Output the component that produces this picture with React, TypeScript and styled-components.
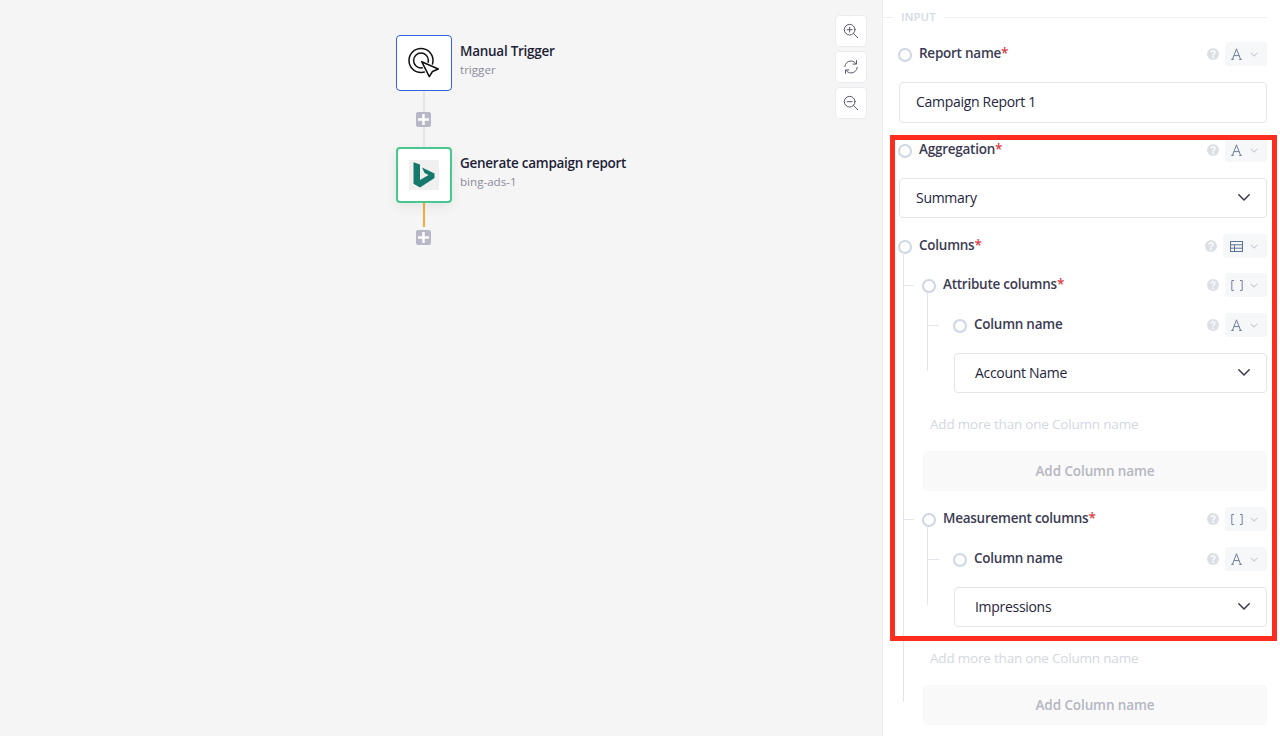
import React from "react";
import styled, { createGlobalStyle } from "styled-components";

const Global = createGlobalStyle`
  html, body { margin: 0; padding: 0; height: 100%; background: #fff; overflow: hidden; }
  body { font-family: "Open Sans", "Noto Sans", sans-serif; }
  * { box-sizing: border-box; }
`;

const Page = styled.div`
  position: relative;
  display: flex;
  width: 1280px;
  height: 736px;
  overflow: hidden;
`;

const Canvas = styled.main`
  position: relative;
  flex: 0 0 882px;
  height: 736px;
  background: #f5f5f5;
  padding: 35px 0 0 396px;
`;

const Controls = styled.div`
  position: absolute;
  top: 15px;
  left: 835px;
  display: flex;
  flex-direction: column;
  gap: 4px;
`;

const ControlButton = styled.button`
  display: flex;
  align-items: center;
  justify-content: center;
  width: 32px;
  height: 32px;
  padding: 0;
  background: #fff;
  border: 1px solid #ececf0;
  border-radius: 4px;
`;

const NodeRow = styled.div`
  display: flex;
  align-items: flex-start;
  gap: 8px;
`;

const NodeBox = styled.div<{ $color: string; $width: number; $shadow?: boolean }>`
  display: flex;
  align-items: center;
  justify-content: center;
  flex: 0 0 56px;
  width: 56px;
  height: 56px;
  background: #fff;
  border: ${(p) => p.$width}px solid ${(p) => p.$color};
  border-radius: 4px;
  box-shadow: ${(p) => (p.$shadow ? "0 4px 12px rgba(40,40,70,0.08)" : "none")};
`;

const NodeText = styled.div`
  display: flex;
  flex-direction: column;
  padding-top: 7px;
`;

const NodeTitle = styled.div`
  font-size: 13.5px;
  line-height: 18px;
  font-weight: 600;
  letter-spacing: -0.27px;
  color: #1e1e38;
  white-space: nowrap;
`;

const NodeSub = styled.div`
  font-size: 11.6px;
  line-height: 18px;
  margin-top: 1px;
  color: #8b8b9b;
`;

const Link = styled.div<{ $color: string; $height: number; $mb?: number }>`
  width: 2px;
  height: ${(p) => p.$height}px;
  margin: 0 0 ${(p) => p.$mb ?? 0}px 27px;
  background: ${(p) => p.$color};
`;

const PlusBox = styled.div`
  display: flex;
  align-items: center;
  justify-content: center;
  width: 15px;
  height: 15px;
  margin-left: 20px;
  background: #b7b7c7;
  border-radius: 2px;
`;

const Panel = styled.aside`
  flex: 1;
  height: 736px;
  border-left: 1px solid #ececf0;
  background: #fff;
  padding: 0 13px 0 15px;
`;

const SectionHead = styled.div`
  display: flex;
  align-items: center;
  height: 34px;
  margin-left: -15px;
  gap: 8px;
  font-size: 11.5px;
  font-weight: 600;
  color: #d3dae4;
  &::before { content: ""; width: 10px; height: 1px; background: #eceef2; }
  &::after { content: ""; flex: 1; height: 1px; background: #eceef2; }
`;

const SectionName = styled.span`
  margin-top: -2px;
`;

const Row = styled.div<{ $top: number; $tick?: number }>`
  position: relative;
  display: flex;
  align-items: center;
  height: 24px;
  margin-top: ${(p) => p.$top}px;
  ${(p) =>
    p.$tick
      ? `&::before { content: ""; position: absolute; top: 12px; left: ${-p.$tick}px; width: 11px; height: 1px; background: #e3e6ee; }`
      : ""}
`;

const Radio = styled.span`
  flex: 0 0 14px;
  width: 14px;
  height: 14px;
  margin: 2px 7px 0 0;
  border: 2px solid #cdd6e2;
  border-radius: 50%;
  background: #fff;
`;

const Label = styled.label`
  flex: 1;
  margin-top: -2px;
  font-size: 13.5px;
  font-weight: 600;
  letter-spacing: -0.25px;
  color: #3b3b52;
  white-space: nowrap;
`;

const Star = styled.span`
  color: #dc3b42;
`;

const TypeButton = styled.div<{ $wide?: boolean }>`
  display: flex;
  align-items: center;
  justify-content: space-between;
  width: ${(p) => (p.$wide ? 44 : 42)}px;
  height: 24px;
  margin-left: 5px;
  padding: 0 9px 0 ${(p) => (p.$wide ? 7 : 6)}px;
  background: #f6f7f9;
  border-radius: 3px;
`;

const TextInput = styled.div`
  display: flex;
  align-items: center;
  height: 41px;
  margin: 16px 0 0 1px;
  padding: 0 0 2px 16px;
  background: #fff;
  border: 1px solid #e3e5ea;
  border-radius: 4px;
  font-size: 14px;
  letter-spacing: -0.3px;
  color: #25253c;
`;

const SelectBox = styled.div<{ $inset: number; $left?: number }>`
  display: flex;
  align-items: center;
  justify-content: space-between;
  height: 40px;
  margin: 16px 0 0 ${(p) => p.$left ?? 1}px;
  padding: 0 16px 2px ${(p) => p.$inset}px;
  background: #fff;
  border: 1px solid #e3e5ea;
  border-radius: 4px;
  font-size: 14px;
  letter-spacing: -0.3px;
  color: #25253c;
`;

const Branch = styled.div<{ $inset: number; $top: number; $bottom: number }>`
  position: relative;
  padding-left: ${(p) => p.$inset}px;
  &::before {
    content: "";
    position: absolute;
    left: 5px;
    top: ${(p) => p.$top}px;
    bottom: ${(p) => p.$bottom}px;
    width: 1px;
    background: #e3e6ee;
  }
`;

const Hint = styled.div`
  height: 20px;
  margin: 21px 0 0 8px;
  font-size: 13.5px;
  line-height: 20px;
  letter-spacing: -0.2px;
  color: #d3d8e0;
`;

const AddButton = styled.button`
  display: block;
  width: calc(100% - 1px);
  height: 40px;
  margin: 17px 0 0 1px;
  border: 0;
  border-radius: 4px;
  background: #f9f9fa;
  font-family: inherit;
  font-size: 13.5px;
  font-weight: 600;
  letter-spacing: -0.1px;
  color: #b5b6c1;
`;

const Highlight = styled.div`
  position: absolute;
  left: 890px;
  top: 135px;
  width: 387px;
  height: 506px;
  border: 5px solid #ff2d20;
  pointer-events: none;
`;

const Glyph = styled.svg`
  display: block;
  flex: none;
`;

const ZoomIcon = ({ plus }: { plus: boolean }) => (
  <Glyph width="16" height="16" viewBox="0 0 18 18" fill="none" stroke="#55556c" strokeWidth="1.1" strokeLinecap="round">
    <circle cx="7.5" cy="7.5" r="6" />
    <path d="M11.8 11.8L16.5 16.5M4.8 7.5h5.4" />
    {plus && <path d="M7.5 4.8v5.4" />}
  </Glyph>
);

const RefreshIcon = () => (
  <Glyph width="16" height="16" viewBox="0 0 18 18" fill="none" stroke="#55556c" strokeWidth="1.1" strokeLinecap="round" strokeLinejoin="round">
    <path d="M2 8.5C2.4 4.8 5.4 2.3 9 2.3c2.4 0 4.4 1.1 5.6 3M16 9.5c-.4 3.7-3.4 6.2-7 6.2-2.4 0-4.4-1.1-5.6-3" />
    <path d="M15.2 1.8v3.9h-3.9M2.8 16.2v-3.9h3.9" />
  </Glyph>
);

const ARROW = "M13.7 14.7L30.3 22l-5.8 2.5-3.2 5.2z";

const TriggerIcon = () => (
  <Glyph width="32" height="32" viewBox="0 0 32 32" fill="none" stroke="#111" strokeWidth="1.5" strokeLinejoin="round">
    <circle cx="13" cy="13.5" r="12" />
    <circle cx="13" cy="13.5" r="7.4" />
    <path d={ARROW} fill="#fff" stroke="#fff" strokeWidth="3.4" />
    <path d={ARROW} fill="#fff" />
  </Glyph>
);

const BingIcon = () => (
  <Glyph width="30" height="30" viewBox="0 0 30 30">
    <rect width="30" height="30" fill="#f0f0f0" />
    <path d="M4.5 2.3L11 4.6V20l8.6-5-4-1.9L13 7.5 25.5 13.6V18L11 27.5 4.5 23.8z" fill="#14786a" />
  </Glyph>
);

const PlusIcon = () => (
  <Glyph width="11" height="11" viewBox="0 0 11 11">
    <path d="M4.3 0h2.4v4.3H11v2.4H6.7V11H4.3V6.7H0V4.3h4.3z" fill="#fff" />
  </Glyph>
);

const HelpIcon = () => (
  <Glyph width="14" height="14" viewBox="0 0 14 14">
    <circle cx="7" cy="7" r="6" fill="#dce0e6" />
    <path d="M5 5.6C5 4.5 5.9 3.8 7 3.8s2 .7 2 1.7c0 1.5-2 1.5-2 2.9" fill="none" stroke="#fff" strokeWidth="1.3" />
    <circle cx="7" cy="10.2" r=".85" fill="#fff" />
  </Glyph>
);

const SmallChevron = () => (
  <Glyph width="8" height="5" viewBox="0 0 8 5" fill="none" stroke="#c8cdd7" strokeWidth="1.1">
    <path d="M.6.8L4 4 7.4.8" />
  </Glyph>
);

const TextTypeIcon = () => (
  <Glyph width="11" height="12" viewBox="0 0 11 12" fill="none" stroke="#6d7d96" strokeWidth="1">
    <path d="M1.5 11.2L5.5.8l4 10.4M3 7.6h5M.2 11.4h2.6M8.2 11.4h2.6" />
  </Glyph>
);

const TableTypeIcon = () => (
  <Glyph width="13" height="11" viewBox="0 0 13 11" fill="none" stroke="#5f7393" strokeWidth="1">
    <rect x=".5" y=".5" width="12" height="10" />
    <path d="M.5 3.8h12M.5 7.2h12M4.5 3.8v6.7" />
  </Glyph>
);

const ArrayTypeIcon = () => (
  <Glyph width="12" height="11" viewBox="0 0 12 11" fill="none" stroke="#73829a" strokeWidth="1">
    <path d="M3 .5H.8v10H3M9 .5h2.2v10H9" />
  </Glyph>
);

const SelectChevron = () => (
  <Glyph width="12" height="7" viewBox="0 0 12 7" fill="none" stroke="#3a3a50" strokeWidth="1.5" strokeLinecap="round" strokeLinejoin="round">
    <path d="M.8.8L6 6 11.2.8" />
  </Glyph>
);

type Kind = "text" | "table" | "array";

const FieldRow = ({ name, required, kind, top, tick }: { name: string; required?: boolean; kind: Kind; top: number; tick?: number }) => (
  <Row $top={top} $tick={tick}>
    <Radio />
    <Label>
      {name}
      {required && <Star>*</Star>}
    </Label>
    <HelpIcon />
    <TypeButton $wide={kind === "table"}>
      {kind === "text" && <TextTypeIcon />}
      {kind === "table" && <TableTypeIcon />}
      {kind === "array" && <ArrayTypeIcon />}
      <SmallChevron />
    </TypeButton>
  </Row>
);

const ListField = ({ name, top, value }: { name: string; top: number; value: string }) => (
  <>
    <FieldRow name={name} required kind="array" top={top} tick={19} />
    <Branch $inset={31} $top={-20} $bottom={22}>
      <FieldRow name="Column name" kind="text" top={16} tick={25} />
      <SelectBox $inset={20}>
        {value}
        <SelectChevron />
      </SelectBox>
    </Branch>
    <Hint>Add more than one Column name</Hint>
    <AddButton>Add Column name</AddButton>
  </>
);

export default function App() {
  return (
    <Page>
      <Global />
      <Canvas>
        <NodeRow>
          <NodeBox $color="#2f62e6" $width={1}>
            <TriggerIcon />
          </NodeBox>
          <NodeText>
            <NodeTitle>Manual Trigger</NodeTitle>
            <NodeSub>trigger</NodeSub>
          </NodeText>
        </NodeRow>
        <Link $color="#e4e4ea" $height={21} />
        <PlusBox>
          <PlusIcon />
        </PlusBox>
        <Link $color="#e4e4ea" $height={20} />
        <NodeRow>
          <NodeBox $color="#48c78f" $width={2} $shadow>
            <BingIcon />
          </NodeBox>
          <NodeText>
            <NodeTitle>Generate campaign report</NodeTitle>
            <NodeSub>bing-ads-1</NodeSub>
          </NodeText>
        </NodeRow>
        <Link $color="#f6ad3b" $height={24} $mb={3} />
        <PlusBox>
          <PlusIcon />
        </PlusBox>
        <Controls>
          <ControlButton aria-label="Zoom in">
            <ZoomIcon plus />
          </ControlButton>
          <ControlButton aria-label="Reset">
            <RefreshIcon />
          </ControlButton>
          <ControlButton aria-label="Zoom out">
            <ZoomIcon plus={false} />
          </ControlButton>
        </Controls>
      </Canvas>
      <Panel>
        <SectionHead>
          <SectionName>INPUT</SectionName>
        </SectionHead>
        <FieldRow name="Report name" required kind="text" top={8} />
        <TextInput>Campaign Report 1</TextInput>
        <FieldRow name="Aggregation" required kind="text" top={15} />
        <SelectBox $inset={16}>
          Summary
          <SelectChevron />
        </SelectBox>
        <FieldRow name="Columns" required kind="table" top={16} />
        <Branch $inset={24} $top={-21} $bottom={23}>
          <ListField name="Attribute columns" top={15} value="Account Name" />
          <ListField name="Measurement columns" top={16} value="Impressions" />
        </Branch>
      </Panel>
      <Highlight />
    </Page>
  );
}
